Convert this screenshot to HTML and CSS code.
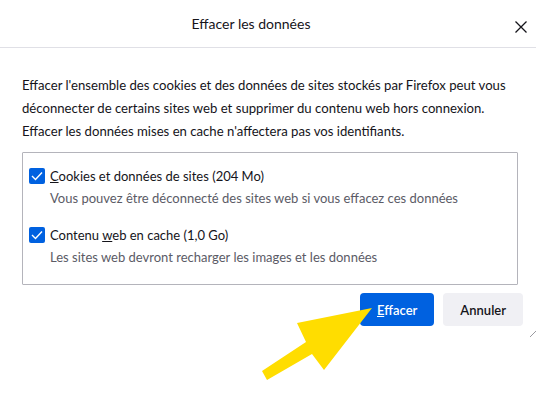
FILE: index.html
```html
<!DOCTYPE html>
<html lang="fr">
<head>
  <meta charset="UTF-8">
  <title>Effacer les données</title>
  <link rel="stylesheet" href="styles.css">
</head>
<body>

  <div class="dialog">
    <div class="dialog-header">
      <div class="dialog-title">Effacer les données</div>
      <button class="close-button" aria-label="Fermer">
        <svg width="12" height="12" viewBox="0 0 12 12">
          <path d="M0.5 0.5 L11.5 11.5 M11.5 0.5 L0.5 11.5" stroke="#15141a" stroke-width="1.3" fill="none"/>
        </svg>
      </button>
    </div>

    <div class="dialog-body">
      <p class="intro">Effacer l'ensemble des cookies et des données de sites stockés par Firefox peut vous déconnecter de certains sites web et supprimer du contenu web hors connexion. Effacer les données mises en cache n'affectera pas vos identifiants.</p>

      <div class="options">
        <div class="option">
          <label class="option-row">
            <span class="checkbox">
              <svg width="12" height="10" viewBox="0 0 12 10"><path d="M1 5 L4.5 8.5 L11 1.5" stroke="#fff" stroke-width="1.4" fill="none"/></svg>
            </span>
            <span><u>C</u>ookies et données de sites (204 Mo)</span>
          </label>
          <div class="option-desc">Vous pouvez être déconnecté des sites web si vous effacez ces données</div>
        </div>
        <div class="option">
          <label class="option-row">
            <span class="checkbox">
              <svg width="12" height="10" viewBox="0 0 12 10"><path d="M1 5 L4.5 8.5 L11 1.5" stroke="#fff" stroke-width="1.4" fill="none"/></svg>
            </span>
            <span>Contenu <u>w</u>eb en cache (1,0 Go)</span>
          </label>
          <div class="option-desc">Les sites web devront recharger les images et les données</div>
        </div>
      </div>

      <div class="buttons">
        <button class="btn btn-primary"><u>E</u>ffacer</button>
        <button class="btn">Annuler</button>
      </div>
    </div>
  </div>

  <!-- flèche jaune par-dessus -->
  <svg class="arrow" width="536" height="395" viewBox="0 0 536 395">
    <polygon points="372,308 297,323 306,342 262,371 267,380 312,354 324,370" fill="#ffdd00"/>
  </svg>

  <svg class="grip" width="6" height="6" viewBox="0 0 6 6">
    <path d="M0 6 L6 0" stroke="#9a9aa0" stroke-width="1"/>
  </svg>

</body>
</html>
```

FILE: styles.css
```css
body {
  margin: 0;
  font-family: 'Lato', sans-serif;
  font-size: 13px;
  color: #15141a;
  background: #fff;
  width: 536px;
  height: 395px;
  overflow: hidden;
  position: relative;
}

.dialog-header {
  display: flex;
  align-items: center;
  height: 47px;
  border-bottom: 1px solid #e0e0e6;
}

.dialog-title {
  flex: 1;
  text-align: center;
  font-size: 14px;
  padding-right: 4px;
}

.close-button {
  width: 30px;
  height: 32px;
  border: none;
  background: none;
  padding: 0;
  display: flex;
  justify-content: center;
  align-items: center;
  margin-top: 6px;
}

.dialog-body {
  padding: 0 18px 0 22px;
}

.intro {
  margin: 26px 0 9px;
  font-size: 13.15px;
  line-height: 23px;
}

.options {
  border: 1px solid #b4b4bb;
  border-radius: 1px;
  padding: 12px 6px 16px;
}

.option {
  margin-bottom: 15px;
}

.option:last-child {
  margin-bottom: 0;
}

.option-row {
  display: flex;
  align-items: center;
  gap: 5px;
  line-height: 22px;
}

.checkbox {
  width: 16px;
  height: 16px;
  border-radius: 2px;
  background: #0061e0;
  display: flex;
  justify-content: center;
  align-items: center;
}

.option-desc {
  margin-left: 21px;
  line-height: 22px;
  color: #5b5b66;
}

.buttons {
  display: flex;
  justify-content: flex-end;
  gap: 9px;
  margin-top: 8px;
  margin-right: -5px;
}

.btn {
  font-family: inherit;
  font-size: 13px;
  font-weight: 600;
  height: 33px;
  padding: 0 17px;
  border: none;
  border-radius: 4px;
  background: #f0f0f4;
  color: #15141a;
}

.btn-primary {
  background: #0061e0;
  color: #fff;
}

.arrow {
  position: absolute;
  left: 0;
  top: 0;
  pointer-events: none;
}

.grip {
  position: absolute;
  left: 530px;
  top: 331px;
}
```
